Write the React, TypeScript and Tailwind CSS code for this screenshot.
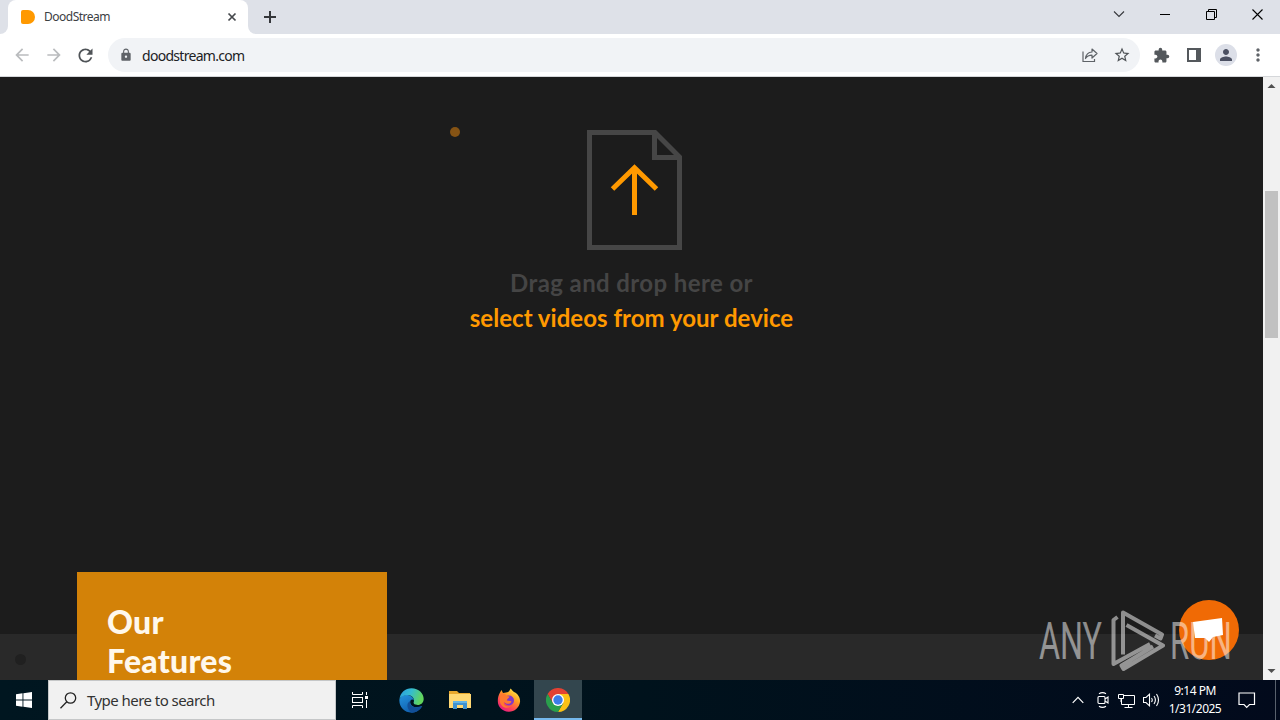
import type { ReactNode } from 'react'
import { MdArrowBack, MdArrowForward, MdExtension, MdLock, MdMoreVert, MdPerson, MdRefresh, MdStarBorder } from 'react-icons/md'

function TabBar() {
  return (
    <header className="flex h-[34px] shrink-0 bg-[#dee1e8] text-[#202124]">
      <div className="flex w-2 bg-white">
        <div className="h-full w-full rounded-br-lg bg-[#dee1e8]" />
      </div>
      <div className="flex w-[240px] items-center rounded-t-lg bg-white pr-[11px] pl-[13px]">
        <svg width="14" height="14" viewBox="0 0 14 14">
          <path d="M2 0H7A7 7 0 0 1 7 14H2Q0 14 0 12V2Q0 0 2 0Z" fill="#ff9900" />
        </svg>
        <span className="ml-[9px] flex-1 text-[12px] tracking-[-0.5px] whitespace-nowrap text-[#3c4043]">DoodStream</span>
        <svg width="10" height="10" viewBox="0 0 10 10">
          <path d="M1.5 1.5L8.5 8.5M8.5 1.5L1.5 8.5" stroke="#45484c" strokeWidth="1.7" />
        </svg>
      </div>
      <div className="flex w-2 bg-white">
        <div className="h-full w-full rounded-bl-lg bg-[#dee1e8]" />
      </div>
      <svg className="mt-[10px] ml-[7px]" width="14" height="14" viewBox="0 0 14 14">
        <path d="M7 1V13M1 7H13" stroke="#35373b" strokeWidth="2" />
      </svg>
      <div className="ml-auto flex">
        <div className="flex w-[46px] items-center justify-center pb-[6px]">
          <svg width="12" height="8" viewBox="0 0 12 8">
            <path d="M1 1.5L6 6.5L11 1.5" fill="none" stroke="#35373b" strokeWidth="1.1" />
          </svg>
        </div>
        <div className="flex w-[46px] items-center justify-center pb-[6px]">
          <span className="h-px w-[10px] bg-black" />
        </div>
        <div className="flex w-[46px] items-center justify-center pb-[6px]">
          <svg width="11" height="11" viewBox="0 0 11 11" fill="none" stroke="#000">
            <path d="M.5 2.5H8.5V10.5H.5ZM2.5 2.5V.5H10.5V8.5H8.5" />
          </svg>
        </div>
        <div className="flex w-[46px] items-center justify-center pb-[6px]">
          <svg width="11" height="11" viewBox="0 0 11 11">
            <path d="M.5 .5L10.5 10.5M10.5 .5L.5 10.5" stroke="#000" strokeWidth="1.1" />
          </svg>
        </div>
      </div>
    </header>
  )
}

function Toolbar() {
  return (
    <div className="flex h-[43px] shrink-0 items-center border-b border-[#d5d7da] bg-white px-3 text-[#5f6368]">
      <MdArrowBack size={20} className="shrink-0 text-[#babcbe]" />
      <MdArrowForward size={20} className="ml-3 shrink-0 text-[#babcbe]" />
      <MdRefresh size={21} className="ml-[11px] shrink-0 text-[#4f5357]" />
      <div className="ml-[12px] flex h-[34px] w-[1032px] shrink-0 items-center rounded-full bg-[#f1f3f6] pr-[9px] pl-[11px]">
        <MdLock size={14} />
        <span className="ml-[9px] flex-1 text-[14px] tracking-[-0.7px] text-[#202124]">doodstream.com</span>
        <svg className="mr-[15px]" width="16" height="16" viewBox="0 0 16 16" fill="none" stroke="#5f6368" strokeWidth="1.2">
          <path d="M1 4.5V14.5H12.5V12" />
          <path d="M3.5 11.5C4 7 6.5 5.2 10 5V2L15 6.5L10 11V8.2C7 8.2 5 9 3.5 11.5Z" strokeLinejoin="round" />
        </svg>
        <MdStarBorder size={18} className="text-[#4f5357]" />
      </div>
      <MdExtension size={17} className="ml-[13px] shrink-0 text-[#54585c]" />
      <svg className="ml-[17px] shrink-0" width="14" height="14" viewBox="0 0 14 14">
        <path d="M1 1H13V13H1Z" fill="none" stroke="#54585c" strokeWidth="2" />
        <path d="M9 0H14V14H9Z" fill="#54585c" />
      </svg>
      <div className="ml-[14px] flex size-[22px] shrink-0 items-center justify-center rounded-full bg-[#dcdfe8]">
        <MdPerson size={18} className="text-[#4b5062]" />
      </div>
      <MdMoreVert size={20} className="ml-[11px] shrink-0" />
    </div>
  )
}

function UploadArea() {
  return (
    <div className="flex flex-col items-center pt-[53px] font-[Lato,sans-serif] text-[24px] leading-[35px] font-bold">
      <svg className="ml-[6px]" width="95" height="120" viewBox="0 0 95 120" fill="none">
        <path d="M2.5 2.5H68L92.5 27V117.5H2.5Z" stroke="#464646" strokeWidth="5" />
        <path d="M67.5 3V27.5H92" stroke="#464646" strokeWidth="5" />
        <path d="M47.5 85V38M25.5 59L47.5 37.8L69.5 59" stroke="#ff9900" strokeWidth="5" />
      </svg>
      <p className="mt-[15px] tracking-[0.4px] whitespace-nowrap text-[#454545]">Drag and drop here or</p>
      <p className="tracking-[0.03px] whitespace-nowrap text-[#ff9900]">select videos from your device</p>
    </div>
  )
}

function Watermark() {
  return (
    <div className="absolute top-[533px] left-[1039px] flex h-[61px] w-[195px] items-center font-[Roboto,sans-serif] text-[52px] leading-none text-white/50">
      <span className="w-[72px] pt-[3px]">
        <span className="inline-block origin-left scale-x-[0.62]">ANY</span>
      </span>
      <svg className="shrink-0" width="54" height="61" viewBox="0 0 54 61" fill="none" stroke="#fff" strokeOpacity=".5" strokeWidth="4" strokeLinejoin="round">
        <path d="M6.5 7L2.5 10V54L39 34M12 44.5V2.5L51 24.5L49.5 28.5L44 25.5M15.5 15L52 35.5L12.5 59L10.5 55.5L42 36.5" />
      </svg>
      <span className="ml-[5px] w-[64px] pt-[3px]">
        <span className="inline-block origin-left scale-x-[0.6]">RUN</span>
      </span>
    </div>
  )
}

function Page() {
  return (
    <main className="relative h-full flex-1 overflow-hidden bg-[#1c1c1c]">
      <UploadArea />
      <div className="absolute top-[50px] left-[450px] size-[10px] rounded-full bg-[#855314]" />
      <div className="absolute inset-x-0 bottom-0 h-[46px] bg-[#292929]" />
      <div className="absolute bottom-[15px] left-[15px] size-[11px] rounded-full bg-[#202020]" />
      <section className="absolute top-[495px] left-[77px] h-[108px] w-[310px] bg-[#d38208] pt-[30px] pl-[30px]">
        <h2 className="font-[Lato,sans-serif] text-[32px] leading-[39px] font-black tracking-[0.25px] text-[#fff8ec]">
          Our
          <br />
          Features
        </h2>
      </section>
      <div className="absolute top-[523px] left-[1179px] flex size-[60px] items-center justify-center rounded-full bg-[#f06a05]">
        <svg className="-mt-[1px] -ml-[3px]" width="32" height="28" viewBox="0 0 32 28">
          <path d="M1 6L30 2L31 19L21 21L17 26L13 22L3 22Z" fill="#fff" />
        </svg>
      </div>
      <Watermark />
    </main>
  )
}

function Scrollbar() {
  return (
    <div className="flex w-[17px] shrink-0 flex-col items-center bg-[#f1f1f1]">
      <svg width="17" height="17" viewBox="0 0 17 17">
        <path d="M4.5 11L8.5 7L12.5 11Z" fill="#505050" />
      </svg>
      <div className="mt-[97px] h-[147px] w-[13px] bg-[#c1c1c1]" />
      <svg className="mt-auto" width="17" height="17" viewBox="0 0 17 17">
        <path d="M4.5 6L8.5 10L12.5 6Z" fill="#505050" />
      </svg>
    </div>
  )
}

function EdgeIcon() {
  return (
    <svg width="25" height="25" viewBox="0 0 24 24">
      <defs>
        <linearGradient id="edge-top" x1="0" y1="0" x2="1" y2="0.3">
          <stop offset="0" stopColor="#2a9be0" />
          <stop offset="0.5" stopColor="#35bcd0" />
          <stop offset="1" stopColor="#62d65c" />
        </linearGradient>
        <linearGradient id="edge-body" x1="0" y1="0" x2="0.6" y2="1">
          <stop offset="0" stopColor="#2492dd" />
          <stop offset="1" stopColor="#0f5cab" />
        </linearGradient>
      </defs>
      <path d="M.4 11C2 7.5 5 6.4 8.5 6.8C12 7.2 14 9.5 14.4 12C12.5 10 10.5 11.5 10.8 13.8C11.3 17.5 16 19.8 22.3 17.3C20 21.5 16 23.7 12 23.7C5 23.7-.2 18 .4 11Z" fill="url(#edge-body)" />
      <path d="M10.8 12.5C9.5 16 13 20.8 22.3 17.3C20 21.5 16 23.7 12.5 23.7C7.5 21 6.5 14.5 10.8 12.5Z" fill="#124f97" />
      <path d="M.5 11C1 4.5 6 .3 12 .3C19 .3 23.7 5.5 23.7 10.5C23.7 14 21 16.3 18 16.3C15 16.3 13.5 15 14.2 13.5C15.5 10 12 6.8 8 6.8C4.5 7 1.5 8.5 .5 11Z" fill="url(#edge-top)" />
    </svg>
  )
}

function ExplorerIcon() {
  return (
    <svg width="22" height="20" viewBox="0 0 22 20">
      <path d="M0 1H8L10 3H21V8H0Z" fill="#e8a82d" />
      <path d="M0 4H22V18H0Z" fill="#ffd873" />
      <path d="M4 11H18V19H14V15H8V19H4Z" fill="#3e91cf" />
      <path d="M4 11H18V13H4Z" fill="#61b3e5" />
    </svg>
  )
}

function FirefoxIcon() {
  return (
    <svg width="24" height="24" viewBox="0 0 24 24">
      <defs>
        <linearGradient id="fox" x1="0.85" y1="0" x2="0.2" y2="1">
          <stop offset="0" stopColor="#fff44f" />
          <stop offset="0.4" stopColor="#ff9a22" />
          <stop offset="0.7" stopColor="#ff4653" />
          <stop offset="1" stopColor="#e31587" />
        </linearGradient>
      </defs>
      <path d="M3 4.5L4.5 2L6 5L9 4.5C11 4.5 12 4 13.5 .5C15 2 16 3.5 18 4.5C21 6 23.5 10 23 14C22.3 20 17 24 11.5 23.7C5.5 23.4.8 19 .8 13C.8 9.5 1.5 7 3 4.5Z" fill="url(#fox)" />
      <circle cx="12" cy="12.5" r="5" fill="#8138c7" />
      <path d="M3.5 6C6 5 9 6 10 8L12.5 8.6C12.5 10 10 10.5 9.8 12.5C11.5 13 13 12.5 14.5 13.5C13.5 16.5 9 16.5 7 14C6 17 10 19.5 14 18C10 22 3 19 2.8 12.5Z" fill="#ff7a2f" />
    </svg>
  )
}

function ChromeIcon() {
  return (
    <svg width="24" height="24" viewBox="0 0 24 24">
      <path d="M12 6H22.4A12 12 0 0 1 12 24L17.2 15Z" fill="#fbc116" />
      <path d="M6.8 15L1.6 6A12 12 0 0 1 22.4 6H12Z" fill="#e34133" />
      <path d="M17.2 15L12 24A12 12 0 0 1 1.6 6L6.8 15Z" fill="#2a9f4c" />
      <circle cx="12" cy="12" r="6" fill="#fff" />
      <circle cx="12" cy="12" r="4.7" fill="#3b7de9" />
    </svg>
  )
}

function TaskItem({ active, children }: { active?: boolean; children: ReactNode }) {
  return (
    <div
      className={
        active
          ? 'flex h-full w-12 items-center justify-center border-b-2 border-[#76b9ed] bg-[#33464e] pt-[2px]'
          : 'flex h-full w-12 items-center justify-center'
      }
    >
      {children}
    </div>
  )
}

function Taskbar() {
  return (
    <footer className="flex h-10 shrink-0 items-center bg-linear-to-r from-[#001620] via-[#00121c] to-[#020a1c] text-white">
      <TaskItem>
        <svg width="16" height="16" viewBox="0 0 16 16" fill="#fff">
          <path d="M0 2.2L6.5 1.3V7.5H0ZM7.4 1.2L16 0V7.5H7.4ZM0 8.4H6.5V14.7L0 13.8ZM7.4 8.4H16V16L7.4 14.8Z" />
        </svg>
      </TaskItem>
      <div className="flex h-full w-[288px] items-center border border-[#c5c7c8] bg-[#f1f1f1] pl-[11px] text-[#333]">
        <svg width="17" height="17" viewBox="0 0 17 17" fill="none" stroke="#222" strokeWidth="1.3">
          <circle cx="10.5" cy="6" r="5.2" />
          <path d="M6.8 9.8L.5 16.2" />
        </svg>
        <span className="ml-[10px] text-[15px] tracking-[-0.55px] whitespace-nowrap">Type here to search</span>
      </div>
      <TaskItem>
        <svg width="16" height="16" viewBox="0 0 16 16" fill="none" stroke="#fff">
          <path d="M.5 0V2.5H10.5V0M.5 16V13.5H10.5V16M0 5.5H11M0 10.5H11M.5 5V11M10.5 5V11M14.5 0V3M14.5 8V16" />
          <path d="M13 4H16V7H13Z" fill="#fff" stroke="none" />
        </svg>
      </TaskItem>
      <div className="ml-[3px] flex h-full gap-px">
        <TaskItem><EdgeIcon /></TaskItem>
        <TaskItem><ExplorerIcon /></TaskItem>
        <TaskItem><FirefoxIcon /></TaskItem>
        <TaskItem active><ChromeIcon /></TaskItem>
      </div>
      <div className="ml-auto flex h-full items-center">
        <svg width="12" height="8" viewBox="0 0 12 8" fill="none" stroke="#fff" strokeWidth="1.2">
          <path d="M.7 6.8L6 1.3L11.3 6.8" />
        </svg>
        <svg className="ml-[13px]" width="12" height="16" viewBox="0 0 12 16" fill="none" stroke="#fff" strokeWidth="1.1">
          <path d="M2 1.8Q5.5-.6 9 1.8M2 14.2Q5.5 16.6 9 14.2" />
          <rect x="1" y="4.5" width="7" height="7" rx="1" />
          <path d="M8 7L11 5V11L8 9" />
        </svg>
        <svg className="ml-[9px]" width="17" height="15" viewBox="0 0 17 15" fill="none" stroke="#fff">
          <path d="M5.5 2.5H16.5V11.5H3.5V6M10.5 11.5V14.5M6.5 14.5H14.5M.5 1.5H5.5V5.5H.5ZM3 5.5V9" />
        </svg>
        <svg className="ml-[8px]" width="17" height="14" viewBox="0 0 17 14" fill="none" stroke="#fff" strokeWidth="1.1">
          <path d="M.5 4.5H3L6.5 1.2V12.8L3 9.5H.5ZM8.5 5Q10 7 8.5 9M11 3Q13.8 7 11 11M13.5 1Q17.5 7 13.5 13" />
        </svg>
        <div className="ml-[5px] w-[60px] text-center text-[12px] leading-[18px] tracking-[-0.5px] whitespace-nowrap">
          <p>9:14 PM</p>
          <p>1/31/2025</p>
        </div>
        <svg className="mr-[19px] ml-[13px]" width="18" height="17" viewBox="0 0 18 17" fill="none" stroke="#fff" strokeWidth="1.2">
          <path d="M1 1H16.5V12.5H11.5L8.7 15.3L6 12.5H1Z" />
        </svg>
        <div className="mr-1 h-full w-px bg-[#59616d]" />
      </div>
    </footer>
  )
}

export default function App() {
  return (
    <div className="flex h-[720px] w-[1280px] flex-col overflow-hidden font-['Noto_Sans',sans-serif]">
      <TabBar />
      <Toolbar />
      <div className="flex h-[603px] shrink-0">
        <Page />
        <Scrollbar />
      </div>
      <Taskbar />
    </div>
  )
}
